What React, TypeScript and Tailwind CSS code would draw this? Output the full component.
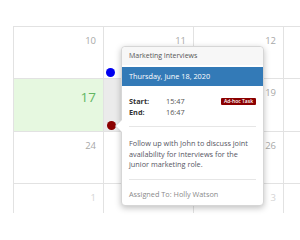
import React from 'react';

type Celda = { dia: string; tipo?: 'hoy' | 'hover' | 'otro' | 'vacio' };

// Los días 25 y 2 quedan tapados por el popover
const filas: Celda[][] = [
  [{ dia: '10' }, { dia: '11' }, { dia: '12' }, { dia: '', tipo: 'vacio' }],
  [{ dia: '17', tipo: 'hoy' }, { dia: '18', tipo: 'hover' }, { dia: '19' }, { dia: '', tipo: 'vacio' }],
  [{ dia: '24' }, { dia: '', tipo: 'vacio' }, { dia: '26' }, { dia: '', tipo: 'vacio' }],
  [{ dia: '1', tipo: 'otro' }, { dia: '', tipo: 'vacio' }, { dia: '3', tipo: 'otro' }, { dia: '', tipo: 'vacio' }],
];

const alturas = ['h-[52px]', 'h-[53px]', 'h-[52px]', 'h-[52px]'];

export default function App() {
  return (
    <div className="relative w-[300px] h-[240px] bg-white overflow-hidden font-['Open_Sans',sans-serif]">
      {/* Grilla del calendario */}
      <div className="ml-[13px] mt-[26px] w-[287px] h-[187px] overflow-hidden">
        <div className="w-[364px] border-l border-t border-[#e2e2e2]">
          {filas.map((fila, i) => (
            <div key={i} className={`flex ${alturas[i]}`}>
              {fila.map((c, j) => (
                <div
                  key={j}
                  className={`w-[90px] shrink-0 border-r border-b border-[#e2e2e2] flex justify-end pr-[7px] ${
                    c.tipo === 'hoy' ? 'bg-[#e6f8e0]' : c.tipo === 'hover' ? 'bg-[#ebebeb]' : 'bg-white'
                  }`}
                >
                  {c.tipo === 'hoy' ? (
                    <span className="text-[13.5px] leading-none mt-[12px] text-[#62b662]">{c.dia}</span>
                  ) : c.tipo === 'hover' || c.tipo === 'vacio' ? null : (
                    <span
                      className={`text-[9.5px] leading-none mt-[9px] ${
                        c.tipo === 'otro' ? 'text-[#d4d4d4]' : 'text-[#a8a8a8]'
                      }`}
                    >
                      {c.dia}
                    </span>
                  )}
                </div>
              ))}
            </div>
          ))}
        </div>
      </div>

      {/* Eventos */}
      <div className="absolute left-[106px] top-[68px] w-[9px] h-[9px] rounded-full bg-[#0000f0]" />
      <div className="absolute left-[107px] top-[121px] w-[9px] h-[9px] rounded-full bg-[#8b0000]" />

      {/* Popover */}
      <div className="absolute left-[121px] top-[46px] w-[143px] bg-white border border-[#d6d6d6] rounded-[4px] shadow-[0_2px_6px_rgba(0,0,0,0.25)]">
        <div className="absolute -left-[7px] top-[72px] w-0 h-0 border-y-[7px] border-y-transparent border-r-[7px] border-r-[#d6d6d6]" />
        <div className="absolute -left-[6px] top-[72px] w-0 h-0 border-y-[7px] border-y-transparent border-r-[7px] border-r-white" />
        <div className="h-[18px] bg-[#f7f7f7] rounded-t-[4px] px-[7px] flex items-center text-[7px] text-[#555]">
          Marketing Interviews
        </div>
        <div className="mt-[2px] h-[19px] bg-[#337ab7] px-[7px] flex items-center text-[7.3px] text-white">
          Thursday, June 18, 2020
        </div>
        <div className="px-[7px] pt-[10px]">
          <div className="flex items-start">
            <div className="text-[7.3px] leading-[11px] text-[#333]">
              <div className="flex">
                <span className="w-[37px] font-bold">Start:</span>
                <span className="text-[#555]">15:47</span>
              </div>
              <div className="flex">
                <span className="w-[37px] font-bold">End:</span>
                <span className="text-[#555]">16:47</span>
              </div>
            </div>
            <span className="ml-auto mt-[2px] bg-[#8b0000] text-white text-[5px] leading-[7px] px-[3px] rounded-[1px] font-semibold">
              Ad-hoc Task
            </span>
          </div>
          <div className="mt-[8px] border-t border-[#e6e6e6]" />
          <p className="mt-[11px] text-[7.3px] leading-[10.5px] text-[#55555f]">
            Follow up with John to discuss joint availability for interviews for the junior marketing role.
          </p>
          <div className="mt-[9px] border-t border-[#e6e6e6]" />
          <div className="pt-[8px] pb-[5px] leading-[12px] text-[7.3px] text-[#8a8a8a]">Assigned To: Holly Watson</div>
        </div>
      </div>
    </div>
  );
}
